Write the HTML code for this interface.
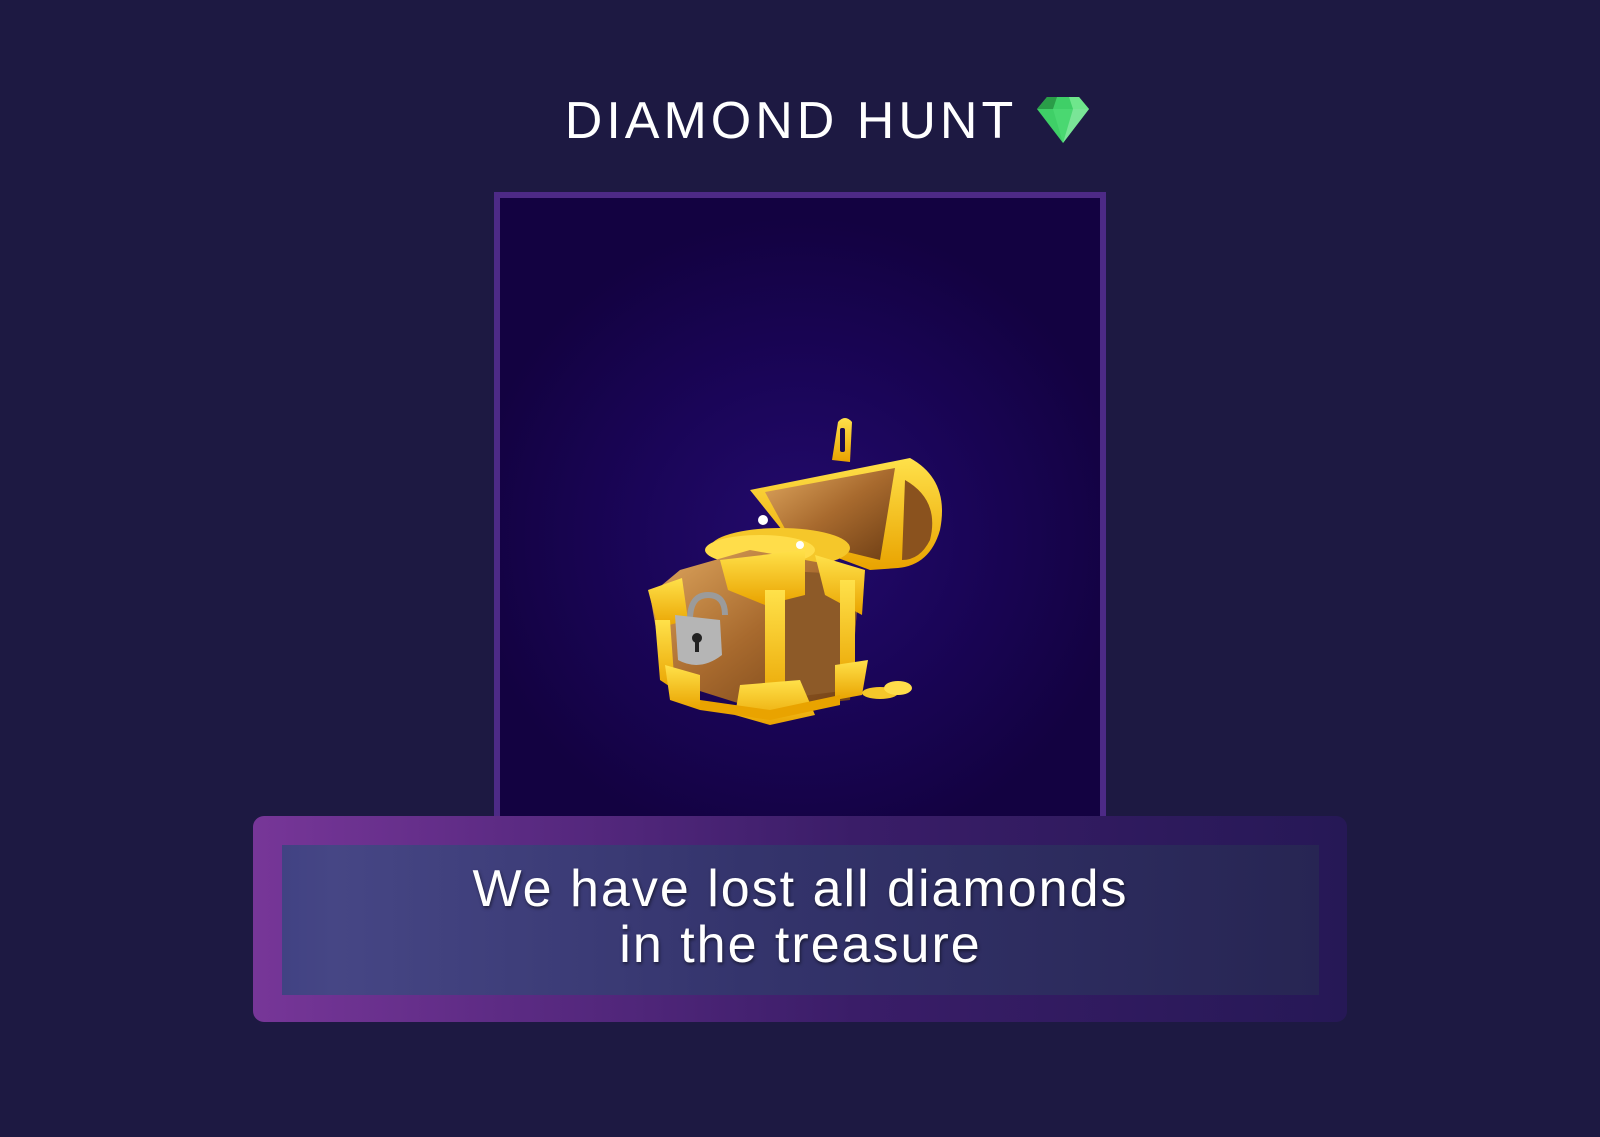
<!DOCTYPE html>
<html><head><meta charset="utf-8"><style>
html,body{margin:0;padding:0}
body{width:1600px;height:1137px;background:#1d1942;position:relative;overflow:hidden;font-family:"Liberation Sans",sans-serif}
.title{position:absolute;left:0;width:1600px;top:86px;text-align:center;color:#fff;font-size:52px;letter-spacing:4px;line-height:70px;padding-left:54px;box-sizing:border-box}
.title svg{vertical-align:-5px;margin-left:20px}
.frame{position:absolute;left:494px;top:192px;width:600px;height:640px;border:6px solid #4d2a86;border-bottom:none;background:radial-gradient(ellipse 55% 50% at 50% 53%,#230a6c 0%,#1a0558 50%,#130241 100%)}
.banner{position:absolute;left:253px;top:816px;width:1094px;height:206px;border-radius:11px;background:linear-gradient(90deg,#773698 0%,#5a2a82 25%,#3a1d68 55%,#261856 100%)}
.inner{position:absolute;left:29px;top:29px;width:1037px;height:150px;background:linear-gradient(90deg,#414283 0%,#464685 5%,#34346c 45%,#272553 100%);color:#fff;text-align:center;font-size:52px;line-height:56px;padding-top:16px;box-sizing:border-box;text-shadow:1px 2px 3px rgba(0,0,0,.5);letter-spacing:2px}
</style></head><body>
<div class="title">DIAMOND HUNT<svg width="52" height="46" viewBox="0 0 52 46"><polygon points="10,0 42,0 52,12 26,46 0,12" fill="#3fcf67"/><polygon points="10,0 20,0 16,12 0,12" fill="#2a9d48"/><polygon points="32,0 42,0 52,12 36,12" fill="#6fe68c"/><polygon points="16,12 36,12 26,46" fill="#4ad871"/><polygon points="36,12 52,12 26,46" fill="#7ae597"/></svg></div>
<div class="frame"></div>
<svg style="position:absolute;left:640px;top:410px" width="330" height="320" viewBox="0 0 330 320">
<defs><linearGradient id="w" x1="0" y1="0" x2="1" y2="1"><stop offset="0" stop-color="#e0a860"/><stop offset=".5" stop-color="#a86a2e"/><stop offset="1" stop-color="#6e3e14"/></linearGradient>
<linearGradient id="g" x1="0" y1="0" x2="0" y2="1"><stop offset="0" stop-color="#ffe14a"/><stop offset="1" stop-color="#e9a300"/></linearGradient></defs>
<path d="M192 50 L198 12 Q205 4 212 12 L210 52 Z" fill="url(#g)"/><rect x="200" y="18" width="5" height="24" rx="2" fill="#1a0a50"/>
<path d="M110 80 L270 48 Q310 70 300 120 Q290 155 258 158 L230 160 L150 130 Z" fill="url(#g)"/>
<path d="M125 82 L255 58 L240 150 L150 128 Z" fill="url(#w)"/>
<path d="M265 70 Q300 90 290 130 Q280 150 262 150 Z" fill="#8a521e"/>
<ellipse cx="140" cy="138" rx="70" ry="20" fill="#f5c72a"/><ellipse cx="120" cy="140" rx="55" ry="15" fill="#ffdd4a"/>
<circle cx="123" cy="110" r="5" fill="#fff"/><circle cx="160" cy="135" r="4" fill="#fff"/>
<path d="M40 160 L110 140 L220 160 L210 290 L120 300 L25 270 L10 185 Z" fill="url(#w)"/>
<path d="M130 160 L220 165 L210 280 L130 290 Z" fill="#8d5a28"/>
<path d="M80 150 L165 140 L165 185 L125 195 L88 180 Z" fill="url(#g)"/>
<path d="M175 145 L225 160 L222 205 L185 185 Z" fill="url(#g)"/>
<path d="M8 180 L42 168 L48 210 L18 218 Z" fill="url(#g)"/>
<rect x="125" y="180" width="20" height="120" fill="url(#g)"/>
<rect x="200" y="170" width="15" height="110" fill="url(#g)"/>
<path d="M15 210 L30 210 L35 280 L20 270 Z" fill="url(#g)"/>
<path d="M25 255 L60 265 L60 300 L30 290 Z" fill="url(#g)"/>
<path d="M100 275 L160 270 L175 305 L130 315 L95 305 Z" fill="url(#g)"/>
<path d="M195 255 L228 250 L222 285 L195 290 Z" fill="url(#g)"/>
<path d="M60 290 L130 300 L200 285 L200 295 L130 310 L60 300 Z" fill="#e9a300"/>
<path d="M50 210 Q50 185 68 185 Q85 185 85 205" fill="none" stroke="#9b9b9b" stroke-width="6"/>
<path d="M35 205 L80 210 L82 245 Q60 262 38 250 Z" fill="#b5b5b5"/>
<circle cx="57" cy="228" r="5" fill="#222"/><rect x="55" y="228" width="4" height="14" fill="#222"/>
<ellipse cx="240" cy="283" rx="18" ry="6" fill="#f5c72a"/><ellipse cx="258" cy="278" rx="14" ry="7" fill="#ffdd4a"/>
</svg>
<div class="banner"><div class="inner">We have lost all diamonds<br>in the treasure</div></div>
</body></html>
